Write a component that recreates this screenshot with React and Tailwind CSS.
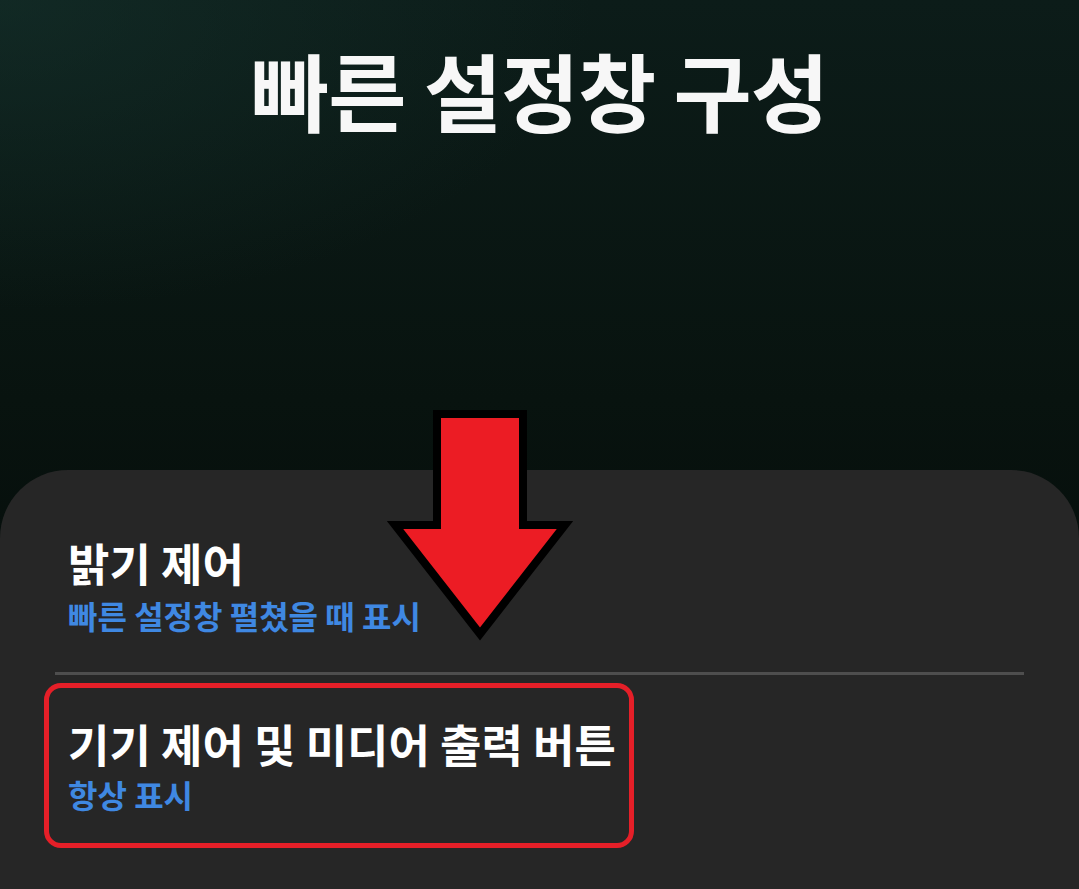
export default function App() {
  return (
    <div
      className="relative flex h-[889px] w-full flex-col overflow-hidden bg-[radial-gradient(ellipse_55%_35%_at_0%_0%,rgba(22,52,46,0.55),transparent),linear-gradient(180deg,#0c1c19_0%,#08130f_45%,#030606_100%)]"
      style={{ fontFamily: '"Noto Sans CJK KR", "Noto Sans", sans-serif' }}
    >
      <h1 className="pt-[38px] text-center text-[85px] font-bold leading-[1.2] tracking-[-1px] text-[#f7f7f7]">
        빠른 설정창 구성
      </h1>

      <div className="mt-auto flex h-[419px] flex-col rounded-t-[68px] bg-[#262626] pt-[66px]">
        <div className="flex flex-col pl-[68px]">
          <div className="text-[45px] font-bold leading-[54px] text-white">밝기 제어</div>
          <div className="mt-[6px] text-[32px] font-bold leading-[38px] text-[#3f88e2]">
            빠른 설정창 펼쳤을 때 표시
          </div>
        </div>

        <div className="mx-[55px] mt-[38px] h-[3px] bg-[#4e4e4e]" />

        <div className="ml-[44px] mt-[8px] flex h-[165px] w-[590px] flex-col rounded-[17px] border-[5px] border-[#e51f28] pl-[19px] pt-[29px]">
          <div className="text-[45px] font-bold leading-[54px] text-white">기기 제어 및 미디어 출력 버튼</div>
          <div className="mt-[4px] text-[32px] font-bold leading-[38px] text-[#3f88e2]">항상 표시</div>
        </div>
      </div>

      <svg
        className="absolute left-[380px] top-[400px]"
        width="200"
        height="250"
        viewBox="380 400 200 250"
      >
        <polygon
          points="437,414 523,414 523,525 565,525 480,634 395,525 437,525"
          fill="#ec1c24"
          stroke="#000"
          strokeWidth="8"
          strokeLinejoin="miter"
          strokeMiterlimit="4"
        />
      </svg>
    </div>
  );
}
